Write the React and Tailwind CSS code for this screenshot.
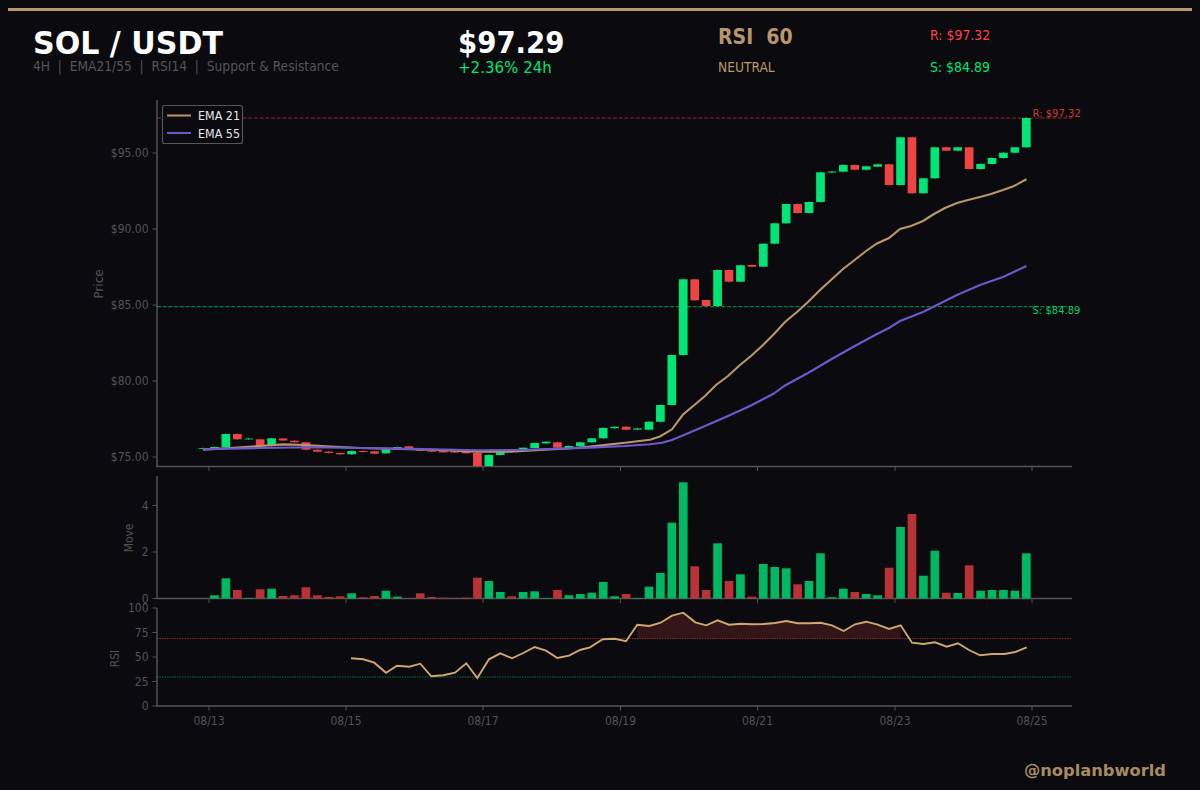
import React from 'react';

// candle bodies in chart pixels: [top, bottom, up?]
const candles = [
  [448.2, 449, 1], [447, 449.7, 1], [434, 447, 1], [434, 439.3, 0], [438.6, 439.4, 1], [439.3, 446, 0],
  [438.3, 446, 1], [438.5, 440.5, 0], [440.7, 442.3, 0], [442.3, 449.7, 0], [449.7, 451.7, 0], [451.7, 453, 0],
  [453, 454.3, 0], [451, 454.3, 1], [451, 452, 0], [451.3, 453.7, 0], [449.3, 453.3, 1], [447, 449, 1],
  [446.3, 449, 0], [449, 450.7, 0], [450.7, 451.7, 0], [451, 452.4, 0], [451.3, 452.5, 0], [452, 453.3, 0],
  [453, 467, 0], [455, 467, 1], [451, 455, 1], [450.5, 451.3, 0], [447.7, 450, 1], [443, 448, 1],
  [441.7, 443.3, 1], [442.3, 447.7, 0], [446, 448.3, 1], [442.3, 446, 1], [438.3, 442.3, 1], [428, 438.3, 1],
  [426.8, 428.2, 1], [426.7, 429.7, 0], [428.4, 429.6, 1], [421.7, 429.7, 1], [405, 421.7, 1], [355, 405, 1],
  [279.3, 355, 1], [279.3, 300.3, 0], [300, 306, 0], [270, 306, 1], [270, 281.7, 0], [265.3, 281.7, 1],
  [265, 266.7, 0], [243.7, 266.7, 1], [223.3, 243.7, 1], [204, 223.3, 1], [204, 213, 0], [202, 213, 1],
  [172.3, 202, 1], [171.5, 172.5, 1], [165, 171.7, 1], [165, 169.7, 0], [166.3, 169.7, 1], [164.3, 166.7, 1],
  [164.3, 185, 0], [137.3, 185, 1], [137.3, 193.3, 0], [178.3, 193.3, 1], [147.3, 178.3, 1], [147.3, 150.7, 0],
  [147.3, 150.7, 1], [147.3, 169, 0], [164, 169, 1], [158, 164, 1], [152.7, 158, 1], [147.3, 152.7, 1],
  [118, 147.3, 1],
];

// top of each move bar, same index as the candles (baseline is 598.5)
const moveTops = [
  598.5, 595.3, 578.3, 590, 598, 589.3, 588.7, 596, 595.3, 587.3, 595.3, 597, 596.3, 593.3, 597.3, 596, 590.7, 596.7,
  598.2, 593.3, 597, 597.7, 597.9, 597.7, 577.7, 581, 592, 596.3, 592, 591.3, 598, 590, 595.3, 594, 592.7, 582,
  596.3, 594, 598, 586.7, 573, 522.7, 482.3, 566.3, 590, 543.3, 581, 574.3, 596.7, 564, 567, 568.3, 584.3, 581,
  553.3, 597.3, 588.7, 592, 594, 595.3, 567.7, 527, 514, 575.7, 550.7, 592.7, 593, 565.3, 590.7, 590, 590, 590.7,
  553.3,
];

const ema21 =
  '203,449.6 226,448.2 260,446 283,444.4 305,445 330,446.5 360,448 400,449 440,450 477,451.8 510,451.6 545,449.6 568,448.5 590,446.6 625,442.8 650,439.8 660,436.5 672,429.3 683,414.5 695,404.5 705,396 716,385 728,376 740,365 751,356 763,345 774,334 785,322 797,312 808,302 820,290 831,280 843,269 854,260.5 866,251 877,243.5 889,238 900,229 911,226 923,221 934,214 945,208 957,203 968,200 980,197 991,194 1003,190 1014,186 1026.5,179.3';
const ema55 =
  '203,449.2 260,448 310,447.2 360,448 400,448.6 477,450.2 520,450 590,447.6 625,446 650,444.2 662,442.8 672,440 684,435 705,426 728,416 750,406 773,394 785,385.5 808,373 830,360 853,347 877,334 889,328 900,321 923,312 945,301 957,295 980,285 1003,277 1026.5,266';
const rsi =
  '351,658.3 363.3,659.3 374.3,662.7 386,672.7 397,665.7 409.3,666.7 420.3,663.7 431.3,676.3 443.3,675.3 455,672.7 466.3,663.3 477.3,678 489,659.3 500.3,653.3 512,658.3 523.3,653 534.7,647 546,650.7 557.3,658 569,655.7 580,650 590,647.3 602.7,639.3 614.7,638.7 626,641.3 637.3,624.7 649.3,626 660.7,622.7 672,615.7 683.3,612.7 695.3,622.3 706.3,625.3 717.7,620.3 729,624.7 741,623.7 752.3,624.3 763.7,624 775,623 786.3,621 797.7,623.3 809.3,623.3 820.7,622.7 832,625.3 843.7,631 855,624.3 866.3,621.7 877.7,624.7 889,629 900.7,625.3 912,642.7 923.3,644 935,642.3 946.7,646.7 958,643.3 969,650 980,655.3 992,654 1004.3,654 1015.3,652 1026.7,647.3';
const rsiZone =
  '637.3,638.5 637.3,624.7 649.3,626 660.7,622.7 672,615.7 683.3,612.7 695.3,622.3 706.3,625.3 717.7,620.3 729,624.7 741,623.7 752.3,624.3 763.7,624 775,623 786.3,621 797.7,623.3 809.3,623.3 820.7,622.7 832,625.3 843.7,631 855,624.3 866.3,621.7 877.7,624.7 889,629 900.7,625.3 900.7,638.5';

const dates = [
  ['08/13', 209],
  ['08/15', 346],
  ['08/17', 483],
  ['08/19', 620.5],
  ['08/21', 757.5],
  ['08/23', 895],
  ['08/25', 1032],
];
const priceTicks = [
  ['$95.00', 153],
  ['$90.00', 229],
  ['$85.00', 305],
  ['$80.00', 381],
  ['$75.00', 457],
];
const moveTicks = [
  ['0', 598.5],
  ['2', 552],
  ['4', 505.5],
];
const rsiTicks = [
  ['100', 608],
  ['75', 632.5],
  ['50', 657],
  ['25', 681.5],
  ['0', 706],
];

const barX = (i) => 203 + 11.435 * i;

// the chart font is a bit narrower than plain DejaVu, so squeeze it sideways
const Label = ({ x, y, size = 11.6, fill = '#555555', anchor = 'start', rotate = false, children }) => (
  <text
    transform={`translate(${x} ${y}) ${rotate ? 'rotate(-90) ' : ''}scale(0.93 1)`}
    textAnchor={anchor}
    fill={fill}
    fontSize={size}
  >
    {children}
  </text>
);

const Axis = ({ top, bottom, ticks }) => (
  <g>
    <path d={`M157 ${top}V${bottom}H1072`} fill="none" stroke="#555555" strokeWidth="1.4" />
    {ticks.map(([label, y]) => (
      <g key={label}>
        <path d={`M152.5 ${y}H157`} stroke="#555555" strokeWidth="1" />
        <Label x={148.5} y={y + 4} anchor="end">
          {label}
        </Label>
      </g>
    ))}
    {dates.map(([label, x]) => (
      <path key={label} d={`M${x} ${bottom}v4.5`} stroke="#555555" strokeWidth="1" />
    ))}
  </g>
);

const App = () => {
  return (
    <div className="h-[790px] w-[1200px] overflow-hidden bg-[#0a0a0f] font-['DejaVu_Sans',sans-serif]">
      {/* Top rule */}
      <div className="pt-2 px-2">
        <div className="h-[3px] bg-[#b8976b]" />
      </div>

      {/* Header */}
      <div className="flex h-[79px] pl-[33px] pt-[14px]">
        <div className="w-[425px]">
          <div className="origin-left scale-x-[0.94] whitespace-nowrap text-[32px] font-bold leading-9 text-white">SOL / USDT</div>
          <div className="origin-left scale-x-[0.93] whitespace-nowrap text-[13.2px] leading-[12px] text-[#555555]">
            4H &nbsp;|&nbsp; EMA21/55 &nbsp;|&nbsp; RSI14 &nbsp;|&nbsp; Support &amp; Resistance
          </div>
        </div>
        <div className="w-[260px]">
          <div className="origin-left scale-x-[0.92] text-[30px] font-bold leading-9 text-white">$97.29</div>
          <div className="origin-left scale-x-[0.94] text-[16px] leading-[14px] text-[#00e676]">+2.36% 24h</div>
        </div>
        <div className="w-[212px]">
          <div className="h-[33px] origin-left scale-x-[0.9] whitespace-pre text-[21px] font-bold leading-6 text-[#b8976b]">RSI  60</div>
          <div className="origin-left scale-x-[0.93] text-[13.2px] leading-5 text-[#b8976b]">NEUTRAL</div>
        </div>
        <div>
          <div className="h-[34px] origin-left scale-x-[0.94] text-[13.3px] leading-[22px] text-[#ff4444]">R: $97.32</div>
          <div className="origin-left scale-x-[0.94] text-[13.3px] leading-[18px] text-[#00e676]">S: $84.89</div>
        </div>
      </div>

      {/* Price, move and RSI panels */}
      <svg viewBox="0 90 1200 650" className="block h-[650px] w-[1200px]" style={{ fontFamily: 'DejaVu Sans' }}>
        <Axis top={100} bottom={466.5} ticks={priceTicks} />
        <Label x={102.5} y={284} size={13} anchor="middle" rotate>
          Price
        </Label>

        <path d="M157 118H1072" stroke="#ff4444" strokeOpacity="0.55" strokeWidth="1.2" strokeDasharray="4 1.7" />
        <path d="M157 306.7H1072" stroke="#00e676" strokeOpacity="0.55" strokeWidth="1.2" strokeDasharray="4 1.7" />
        <Label x={1032.5} y={116.5} size={10.8} fill="#d03a3c">
          R: $97.32
        </Label>
        <Label x={1032.5} y={314} size={10.8} fill="#00d06a">
          S: $84.89
        </Label>

        {candles.map(([top, bottom, up], i) => (
          <g key={i}>
            <path d={`M${barX(i)} ${top - 0.6}V${Math.min(bottom + 0.6, 466)}`} stroke={up ? '#00e676' : '#f04444'} strokeWidth="0.8" />
            <rect
              x={barX(i) - 4.35}
              y={top}
              width="8.7"
              height={Math.min(bottom, 466) - top}
              fill={up ? '#00e676' : '#f04444'}
            />
          </g>
        ))}
        <polyline points={ema21} fill="none" stroke="#b8976b" strokeWidth="2.1" />
        <polyline points={ema55} fill="none" stroke="#6a5acd" strokeWidth="2.1" />

        {/* Legend */}
        <rect x="162.5" y="105.5" width="80" height="38" rx="2" fill="#0a0a0f" fillOpacity="0.85" stroke="#555555" strokeWidth="1.2" />
        <path d="M167 115.5H191" stroke="#b8976b" strokeWidth="2" />
        <path d="M167 133H191" stroke="#6a5acd" strokeWidth="2" />
        <Label x={198} y={120} size={12} fill="#e8e8e8">
          EMA 21
        </Label>
        <Label x={198} y={137.5} size={12} fill="#e8e8e8">
          EMA 55
        </Label>

        <Axis top={476} bottom={598.5} ticks={moveTicks} />
        <Label x={133} y={538} size={11.5} anchor="middle" rotate>
          Move
        </Label>
        {moveTops.map((top, i) => (
          <rect
            key={i}
            x={barX(i) - 4.35}
            y={top}
            width="8.7"
            height={598.5 - top}
            fill={candles[i][2] ? '#00b862' : '#b83236'}
          />
        ))}

        <Axis top={608} bottom={706} ticks={rsiTicks} />
        <Label x={119} y={658.5} size={11.5} anchor="middle" rotate>
          RSI
        </Label>
        <polygon points={rsiZone} fill="#331517" />
        <path d="M157 638.5H1072" stroke="#ff4444" strokeOpacity="0.5" strokeWidth="1" strokeDasharray="1.5 1" />
        <path d="M157 677H1072" stroke="#00e676" strokeOpacity="0.5" strokeWidth="1" strokeDasharray="1.5 1" />
        <polyline points={rsi} fill="none" stroke="#cfa871" strokeWidth="1.9" />

        {dates.map(([label, x]) => (
          <Label key={label} x={x} y={725} anchor="middle">
            {label}
          </Label>
        ))}
      </svg>

      {/* Watermark */}
      <div className="flex justify-end pr-[34px] pt-[21px]">
        <span className="text-[16.3px] font-bold leading-5 text-[#a98b62]">@noplanbworld</span>
      </div>
    </div>
  );
};

export default App;
